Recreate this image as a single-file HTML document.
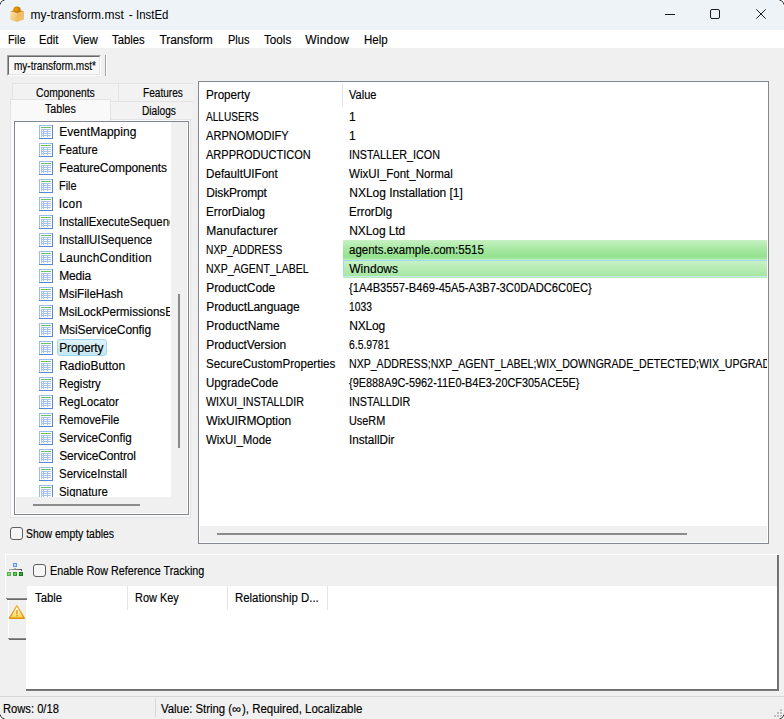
<!DOCTYPE html>
<html>
<head>
<meta charset="utf-8">
<title>my-transform.mst - InstEd</title>
<style>
html,body{margin:0;padding:0;}
body{width:784px;height:719px;overflow:hidden;background:#f0f0f0;position:relative;font-family:"Liberation Sans",sans-serif;color:#000;}
div,span,svg{position:absolute;box-sizing:border-box;}
.t{-webkit-text-stroke:0.15px #000;white-space:pre;transform-origin:0 0;line-height:16px;height:16px;color:#000;font-family:"Liberation Sans",sans-serif;}
.ic{left:24px;}
#titlebar{left:0;top:0;width:784px;height:30px;background:#eef3f8;}
#menubar{left:0;top:30px;width:784px;height:18px;background:#fff;}
#tbbtn{left:7px;top:55px;width:94px;height:21px;background:#f8f8f8;border-top:1px solid #a0a0a0;border-left:1px solid #a0a0a0;border-right:1px solid #fff;border-bottom:1px solid #fff;}
#tbbtn i{position:absolute;left:0;top:0;right:0;bottom:0;border-top:1px solid #696969;border-left:1px solid #696969;border-right:1px solid #e3e3e3;border-bottom:1px solid #e3e3e3;}
#tbsep{left:105px;top:55px;width:2px;height:21px;background:linear-gradient(90deg,#a0a0a0 50%,#fff 50%);}
.tab{background:#f0f0f0;border:1px solid #e3e3e3;}
#tree{left:14px;top:121px;width:175px;height:394px;border:1px solid #828790;background:#fff;}
#treeclip{left:0;top:0;width:155px;height:375px;background:#fff;overflow:hidden;}
#list{left:198px;top:81px;width:571px;height:463px;border:1px solid #828790;background:#fff;}
.thumb{background:#8b8b8b;}
.cb{width:13px;height:13px;border:1px solid #5f5f5f;border-radius:3px;background:#f5f5f5;}
</style>
</head>
<body>
<div id="titlebar"></div>
<div id="menubar"></div>

<!-- app icon -->
<svg style="left:9px;top:5px" width="17" height="18" viewBox="0 0 17 18">
<defs>
<linearGradient id="gl" x1="0" y1="0" x2="1" y2="1"><stop offset="0" stop-color="#fbe7b0"/><stop offset="1" stop-color="#eeb95c"/></linearGradient>
<linearGradient id="gr" x1="0" y1="0" x2="1" y2="1"><stop offset="0" stop-color="#efb659"/><stop offset="1" stop-color="#f3c575"/></linearGradient>
<radialGradient id="gb" cx="0.4" cy="0.45" r="0.6"><stop offset="0" stop-color="#f5a009"/><stop offset="1" stop-color="#b97600"/></radialGradient>
</defs>
<path d="M1.2 6.2 L8 8 L8 17 L1.2 14.6 Z" fill="url(#gl)"/>
<path d="M8 8 L15 6.2 L15 14.6 L8 17 Z" fill="url(#gr)"/>
<path d="M1.2 6.2 L8 4.6 L15 6.2 L8 8 Z" fill="#c98a1a"/>
<ellipse cx="8" cy="4.5" rx="3.6" ry="2.9" fill="url(#gb)"/>
</svg>

<!-- window controls -->
<svg style="left:660px;top:4px" width="112" height="20" viewBox="0 0 112 20" fill="none" stroke="#1a1a1a" stroke-width="1">
<path d="M5 10.5 H15"/>
<rect x="50.5" y="5.5" width="9" height="9" rx="1.5"/>
<path d="M96.3 5.3 L105.7 14.7 M105.7 5.3 L96.3 14.7"/>
</svg>

<!-- toolbar -->
<div id="tbbtn"><i></i></div>
<div id="tbsep"></div>

<!-- tabs -->
<div class="tab" style="left:12px;top:83px;width:107px;height:19px;background:#f2f2f2;"></div>
<div class="tab" style="left:118px;top:83px;width:75px;height:19px;border-right:none;background:#f2f2f2;"></div>
<div class="tab" style="left:110px;top:101px;width:82px;height:19px;border-right:none;background:#f2f2f2;"></div>
<div style="left:10px;top:119px;width:181px;height:399px;border:1px solid #e3e3e3;background:#f9f9f9;"></div>
<div style="left:10px;top:99px;width:101px;height:22px;background:#f9f9f9;border:1px solid #e3e3e3;border-bottom:none;"></div>

<!-- tree -->
<div id="tree">
 <div id="treeclip">
  <div style="left:42px;top:217px;width:50px;height:17px;background:linear-gradient(#dcf2fa,#c5e7f2);border:1px solid #a3d6ec;border-radius:3px;"></div>
  <svg class="ic" style="top:3px" width="14" height="14" viewBox="0 0 14 14" shape-rendering="crispEdges">
<rect x="0" y="0" width="14" height="14" fill="#5588d2"/><rect x="0" y="0" width="13" height="13" fill="#9dbdeb"/><rect x="1" y="1" width="12" height="12" fill="#6f9ddb"/><rect x="1" y="1" width="12" height="12" fill="#fff"/>
<rect x="2" y="2" width="10" height="1" fill="#6cc06a"/>
<g fill="#a9c4ea"><rect x="2" y="4" width="10" height="1"/><rect x="2" y="6" width="10" height="1"/><rect x="2" y="8" width="10" height="1"/><rect x="2" y="10" width="10" height="1"/>
<rect x="2" y="4" width="1" height="8"/><rect x="4" y="4" width="1" height="8"/><rect x="8" y="4" width="1" height="8"/></g>
</svg><svg class="ic" style="top:21px" width="14" height="14" viewBox="0 0 14 14" shape-rendering="crispEdges">
<rect x="0" y="0" width="14" height="14" fill="#5588d2"/><rect x="0" y="0" width="13" height="13" fill="#9dbdeb"/><rect x="1" y="1" width="12" height="12" fill="#6f9ddb"/><rect x="1" y="1" width="12" height="12" fill="#fff"/>
<rect x="2" y="2" width="10" height="1" fill="#6cc06a"/>
<g fill="#a9c4ea"><rect x="2" y="4" width="10" height="1"/><rect x="2" y="6" width="10" height="1"/><rect x="2" y="8" width="10" height="1"/><rect x="2" y="10" width="10" height="1"/>
<rect x="2" y="4" width="1" height="8"/><rect x="4" y="4" width="1" height="8"/><rect x="8" y="4" width="1" height="8"/></g>
</svg><svg class="ic" style="top:39px" width="14" height="14" viewBox="0 0 14 14" shape-rendering="crispEdges">
<rect x="0" y="0" width="14" height="14" fill="#5588d2"/><rect x="0" y="0" width="13" height="13" fill="#9dbdeb"/><rect x="1" y="1" width="12" height="12" fill="#6f9ddb"/><rect x="1" y="1" width="12" height="12" fill="#fff"/>
<rect x="2" y="2" width="10" height="1" fill="#6cc06a"/>
<g fill="#a9c4ea"><rect x="2" y="4" width="10" height="1"/><rect x="2" y="6" width="10" height="1"/><rect x="2" y="8" width="10" height="1"/><rect x="2" y="10" width="10" height="1"/>
<rect x="2" y="4" width="1" height="8"/><rect x="4" y="4" width="1" height="8"/><rect x="8" y="4" width="1" height="8"/></g>
</svg><svg class="ic" style="top:57px" width="14" height="14" viewBox="0 0 14 14" shape-rendering="crispEdges">
<rect x="0" y="0" width="14" height="14" fill="#5588d2"/><rect x="0" y="0" width="13" height="13" fill="#9dbdeb"/><rect x="1" y="1" width="12" height="12" fill="#6f9ddb"/><rect x="1" y="1" width="12" height="12" fill="#fff"/>
<rect x="2" y="2" width="10" height="1" fill="#6cc06a"/>
<g fill="#a9c4ea"><rect x="2" y="4" width="10" height="1"/><rect x="2" y="6" width="10" height="1"/><rect x="2" y="8" width="10" height="1"/><rect x="2" y="10" width="10" height="1"/>
<rect x="2" y="4" width="1" height="8"/><rect x="4" y="4" width="1" height="8"/><rect x="8" y="4" width="1" height="8"/></g>
</svg><svg class="ic" style="top:75px" width="14" height="14" viewBox="0 0 14 14" shape-rendering="crispEdges">
<rect x="0" y="0" width="14" height="14" fill="#5588d2"/><rect x="0" y="0" width="13" height="13" fill="#9dbdeb"/><rect x="1" y="1" width="12" height="12" fill="#6f9ddb"/><rect x="1" y="1" width="12" height="12" fill="#fff"/>
<rect x="2" y="2" width="10" height="1" fill="#6cc06a"/>
<g fill="#a9c4ea"><rect x="2" y="4" width="10" height="1"/><rect x="2" y="6" width="10" height="1"/><rect x="2" y="8" width="10" height="1"/><rect x="2" y="10" width="10" height="1"/>
<rect x="2" y="4" width="1" height="8"/><rect x="4" y="4" width="1" height="8"/><rect x="8" y="4" width="1" height="8"/></g>
</svg><svg class="ic" style="top:93px" width="14" height="14" viewBox="0 0 14 14" shape-rendering="crispEdges">
<rect x="0" y="0" width="14" height="14" fill="#5588d2"/><rect x="0" y="0" width="13" height="13" fill="#9dbdeb"/><rect x="1" y="1" width="12" height="12" fill="#6f9ddb"/><rect x="1" y="1" width="12" height="12" fill="#fff"/>
<rect x="2" y="2" width="10" height="1" fill="#6cc06a"/>
<g fill="#a9c4ea"><rect x="2" y="4" width="10" height="1"/><rect x="2" y="6" width="10" height="1"/><rect x="2" y="8" width="10" height="1"/><rect x="2" y="10" width="10" height="1"/>
<rect x="2" y="4" width="1" height="8"/><rect x="4" y="4" width="1" height="8"/><rect x="8" y="4" width="1" height="8"/></g>
</svg><svg class="ic" style="top:111px" width="14" height="14" viewBox="0 0 14 14" shape-rendering="crispEdges">
<rect x="0" y="0" width="14" height="14" fill="#5588d2"/><rect x="0" y="0" width="13" height="13" fill="#9dbdeb"/><rect x="1" y="1" width="12" height="12" fill="#6f9ddb"/><rect x="1" y="1" width="12" height="12" fill="#fff"/>
<rect x="2" y="2" width="10" height="1" fill="#6cc06a"/>
<g fill="#a9c4ea"><rect x="2" y="4" width="10" height="1"/><rect x="2" y="6" width="10" height="1"/><rect x="2" y="8" width="10" height="1"/><rect x="2" y="10" width="10" height="1"/>
<rect x="2" y="4" width="1" height="8"/><rect x="4" y="4" width="1" height="8"/><rect x="8" y="4" width="1" height="8"/></g>
</svg><svg class="ic" style="top:129px" width="14" height="14" viewBox="0 0 14 14" shape-rendering="crispEdges">
<rect x="0" y="0" width="14" height="14" fill="#5588d2"/><rect x="0" y="0" width="13" height="13" fill="#9dbdeb"/><rect x="1" y="1" width="12" height="12" fill="#6f9ddb"/><rect x="1" y="1" width="12" height="12" fill="#fff"/>
<rect x="2" y="2" width="10" height="1" fill="#6cc06a"/>
<g fill="#a9c4ea"><rect x="2" y="4" width="10" height="1"/><rect x="2" y="6" width="10" height="1"/><rect x="2" y="8" width="10" height="1"/><rect x="2" y="10" width="10" height="1"/>
<rect x="2" y="4" width="1" height="8"/><rect x="4" y="4" width="1" height="8"/><rect x="8" y="4" width="1" height="8"/></g>
</svg><svg class="ic" style="top:147px" width="14" height="14" viewBox="0 0 14 14" shape-rendering="crispEdges">
<rect x="0" y="0" width="14" height="14" fill="#5588d2"/><rect x="0" y="0" width="13" height="13" fill="#9dbdeb"/><rect x="1" y="1" width="12" height="12" fill="#6f9ddb"/><rect x="1" y="1" width="12" height="12" fill="#fff"/>
<rect x="2" y="2" width="10" height="1" fill="#6cc06a"/>
<g fill="#a9c4ea"><rect x="2" y="4" width="10" height="1"/><rect x="2" y="6" width="10" height="1"/><rect x="2" y="8" width="10" height="1"/><rect x="2" y="10" width="10" height="1"/>
<rect x="2" y="4" width="1" height="8"/><rect x="4" y="4" width="1" height="8"/><rect x="8" y="4" width="1" height="8"/></g>
</svg><svg class="ic" style="top:165px" width="14" height="14" viewBox="0 0 14 14" shape-rendering="crispEdges">
<rect x="0" y="0" width="14" height="14" fill="#5588d2"/><rect x="0" y="0" width="13" height="13" fill="#9dbdeb"/><rect x="1" y="1" width="12" height="12" fill="#6f9ddb"/><rect x="1" y="1" width="12" height="12" fill="#fff"/>
<rect x="2" y="2" width="10" height="1" fill="#6cc06a"/>
<g fill="#a9c4ea"><rect x="2" y="4" width="10" height="1"/><rect x="2" y="6" width="10" height="1"/><rect x="2" y="8" width="10" height="1"/><rect x="2" y="10" width="10" height="1"/>
<rect x="2" y="4" width="1" height="8"/><rect x="4" y="4" width="1" height="8"/><rect x="8" y="4" width="1" height="8"/></g>
</svg><svg class="ic" style="top:183px" width="14" height="14" viewBox="0 0 14 14" shape-rendering="crispEdges">
<rect x="0" y="0" width="14" height="14" fill="#5588d2"/><rect x="0" y="0" width="13" height="13" fill="#9dbdeb"/><rect x="1" y="1" width="12" height="12" fill="#6f9ddb"/><rect x="1" y="1" width="12" height="12" fill="#fff"/>
<rect x="2" y="2" width="10" height="1" fill="#6cc06a"/>
<g fill="#a9c4ea"><rect x="2" y="4" width="10" height="1"/><rect x="2" y="6" width="10" height="1"/><rect x="2" y="8" width="10" height="1"/><rect x="2" y="10" width="10" height="1"/>
<rect x="2" y="4" width="1" height="8"/><rect x="4" y="4" width="1" height="8"/><rect x="8" y="4" width="1" height="8"/></g>
</svg><svg class="ic" style="top:201px" width="14" height="14" viewBox="0 0 14 14" shape-rendering="crispEdges">
<rect x="0" y="0" width="14" height="14" fill="#5588d2"/><rect x="0" y="0" width="13" height="13" fill="#9dbdeb"/><rect x="1" y="1" width="12" height="12" fill="#6f9ddb"/><rect x="1" y="1" width="12" height="12" fill="#fff"/>
<rect x="2" y="2" width="10" height="1" fill="#6cc06a"/>
<g fill="#a9c4ea"><rect x="2" y="4" width="10" height="1"/><rect x="2" y="6" width="10" height="1"/><rect x="2" y="8" width="10" height="1"/><rect x="2" y="10" width="10" height="1"/>
<rect x="2" y="4" width="1" height="8"/><rect x="4" y="4" width="1" height="8"/><rect x="8" y="4" width="1" height="8"/></g>
</svg><svg class="ic" style="top:219px" width="14" height="14" viewBox="0 0 14 14" shape-rendering="crispEdges">
<rect x="0" y="0" width="14" height="14" fill="#5588d2"/><rect x="0" y="0" width="13" height="13" fill="#9dbdeb"/><rect x="1" y="1" width="12" height="12" fill="#6f9ddb"/><rect x="1" y="1" width="12" height="12" fill="#fff"/>
<rect x="2" y="2" width="10" height="1" fill="#6cc06a"/>
<g fill="#a9c4ea"><rect x="2" y="4" width="10" height="1"/><rect x="2" y="6" width="10" height="1"/><rect x="2" y="8" width="10" height="1"/><rect x="2" y="10" width="10" height="1"/>
<rect x="2" y="4" width="1" height="8"/><rect x="4" y="4" width="1" height="8"/><rect x="8" y="4" width="1" height="8"/></g>
</svg><svg class="ic" style="top:237px" width="14" height="14" viewBox="0 0 14 14" shape-rendering="crispEdges">
<rect x="0" y="0" width="14" height="14" fill="#5588d2"/><rect x="0" y="0" width="13" height="13" fill="#9dbdeb"/><rect x="1" y="1" width="12" height="12" fill="#6f9ddb"/><rect x="1" y="1" width="12" height="12" fill="#fff"/>
<rect x="2" y="2" width="10" height="1" fill="#6cc06a"/>
<g fill="#a9c4ea"><rect x="2" y="4" width="10" height="1"/><rect x="2" y="6" width="10" height="1"/><rect x="2" y="8" width="10" height="1"/><rect x="2" y="10" width="10" height="1"/>
<rect x="2" y="4" width="1" height="8"/><rect x="4" y="4" width="1" height="8"/><rect x="8" y="4" width="1" height="8"/></g>
</svg><svg class="ic" style="top:255px" width="14" height="14" viewBox="0 0 14 14" shape-rendering="crispEdges">
<rect x="0" y="0" width="14" height="14" fill="#5588d2"/><rect x="0" y="0" width="13" height="13" fill="#9dbdeb"/><rect x="1" y="1" width="12" height="12" fill="#6f9ddb"/><rect x="1" y="1" width="12" height="12" fill="#fff"/>
<rect x="2" y="2" width="10" height="1" fill="#6cc06a"/>
<g fill="#a9c4ea"><rect x="2" y="4" width="10" height="1"/><rect x="2" y="6" width="10" height="1"/><rect x="2" y="8" width="10" height="1"/><rect x="2" y="10" width="10" height="1"/>
<rect x="2" y="4" width="1" height="8"/><rect x="4" y="4" width="1" height="8"/><rect x="8" y="4" width="1" height="8"/></g>
</svg><svg class="ic" style="top:273px" width="14" height="14" viewBox="0 0 14 14" shape-rendering="crispEdges">
<rect x="0" y="0" width="14" height="14" fill="#5588d2"/><rect x="0" y="0" width="13" height="13" fill="#9dbdeb"/><rect x="1" y="1" width="12" height="12" fill="#6f9ddb"/><rect x="1" y="1" width="12" height="12" fill="#fff"/>
<rect x="2" y="2" width="10" height="1" fill="#6cc06a"/>
<g fill="#a9c4ea"><rect x="2" y="4" width="10" height="1"/><rect x="2" y="6" width="10" height="1"/><rect x="2" y="8" width="10" height="1"/><rect x="2" y="10" width="10" height="1"/>
<rect x="2" y="4" width="1" height="8"/><rect x="4" y="4" width="1" height="8"/><rect x="8" y="4" width="1" height="8"/></g>
</svg><svg class="ic" style="top:291px" width="14" height="14" viewBox="0 0 14 14" shape-rendering="crispEdges">
<rect x="0" y="0" width="14" height="14" fill="#5588d2"/><rect x="0" y="0" width="13" height="13" fill="#9dbdeb"/><rect x="1" y="1" width="12" height="12" fill="#6f9ddb"/><rect x="1" y="1" width="12" height="12" fill="#fff"/>
<rect x="2" y="2" width="10" height="1" fill="#6cc06a"/>
<g fill="#a9c4ea"><rect x="2" y="4" width="10" height="1"/><rect x="2" y="6" width="10" height="1"/><rect x="2" y="8" width="10" height="1"/><rect x="2" y="10" width="10" height="1"/>
<rect x="2" y="4" width="1" height="8"/><rect x="4" y="4" width="1" height="8"/><rect x="8" y="4" width="1" height="8"/></g>
</svg><svg class="ic" style="top:309px" width="14" height="14" viewBox="0 0 14 14" shape-rendering="crispEdges">
<rect x="0" y="0" width="14" height="14" fill="#5588d2"/><rect x="0" y="0" width="13" height="13" fill="#9dbdeb"/><rect x="1" y="1" width="12" height="12" fill="#6f9ddb"/><rect x="1" y="1" width="12" height="12" fill="#fff"/>
<rect x="2" y="2" width="10" height="1" fill="#6cc06a"/>
<g fill="#a9c4ea"><rect x="2" y="4" width="10" height="1"/><rect x="2" y="6" width="10" height="1"/><rect x="2" y="8" width="10" height="1"/><rect x="2" y="10" width="10" height="1"/>
<rect x="2" y="4" width="1" height="8"/><rect x="4" y="4" width="1" height="8"/><rect x="8" y="4" width="1" height="8"/></g>
</svg><svg class="ic" style="top:327px" width="14" height="14" viewBox="0 0 14 14" shape-rendering="crispEdges">
<rect x="0" y="0" width="14" height="14" fill="#5588d2"/><rect x="0" y="0" width="13" height="13" fill="#9dbdeb"/><rect x="1" y="1" width="12" height="12" fill="#6f9ddb"/><rect x="1" y="1" width="12" height="12" fill="#fff"/>
<rect x="2" y="2" width="10" height="1" fill="#6cc06a"/>
<g fill="#a9c4ea"><rect x="2" y="4" width="10" height="1"/><rect x="2" y="6" width="10" height="1"/><rect x="2" y="8" width="10" height="1"/><rect x="2" y="10" width="10" height="1"/>
<rect x="2" y="4" width="1" height="8"/><rect x="4" y="4" width="1" height="8"/><rect x="8" y="4" width="1" height="8"/></g>
</svg><svg class="ic" style="top:345px" width="14" height="14" viewBox="0 0 14 14" shape-rendering="crispEdges">
<rect x="0" y="0" width="14" height="14" fill="#5588d2"/><rect x="0" y="0" width="13" height="13" fill="#9dbdeb"/><rect x="1" y="1" width="12" height="12" fill="#6f9ddb"/><rect x="1" y="1" width="12" height="12" fill="#fff"/>
<rect x="2" y="2" width="10" height="1" fill="#6cc06a"/>
<g fill="#a9c4ea"><rect x="2" y="4" width="10" height="1"/><rect x="2" y="6" width="10" height="1"/><rect x="2" y="8" width="10" height="1"/><rect x="2" y="10" width="10" height="1"/>
<rect x="2" y="4" width="1" height="8"/><rect x="4" y="4" width="1" height="8"/><rect x="8" y="4" width="1" height="8"/></g>
</svg><svg class="ic" style="top:363px" width="14" height="14" viewBox="0 0 14 14" shape-rendering="crispEdges">
<rect x="0" y="0" width="14" height="14" fill="#5588d2"/><rect x="0" y="0" width="13" height="13" fill="#9dbdeb"/><rect x="1" y="1" width="12" height="12" fill="#6f9ddb"/><rect x="1" y="1" width="12" height="12" fill="#fff"/>
<rect x="2" y="2" width="10" height="1" fill="#6cc06a"/>
<g fill="#a9c4ea"><rect x="2" y="4" width="10" height="1"/><rect x="2" y="6" width="10" height="1"/><rect x="2" y="8" width="10" height="1"/><rect x="2" y="10" width="10" height="1"/>
<rect x="2" y="4" width="1" height="8"/><rect x="4" y="4" width="1" height="8"/><rect x="8" y="4" width="1" height="8"/></g>
</svg>
  <span class="t" style="left:44.20px;top:2px;font-size:12px;letter-spacing:0.051px;">EventMapping</span>
<span class="t" style="left:44.20px;top:20px;font-size:12px;transform:scaleX(0.9369);">Feature</span>
<span class="t" style="left:44.20px;top:38px;font-size:12px;letter-spacing:-0.100px;">FeatureComponents</span>
<span class="t" style="left:44.20px;top:56px;font-size:12px;transform:scaleX(0.9053);">File</span>
<span class="t" style="left:43.70px;top:74px;font-size:12px;letter-spacing:0.297px;">Icon</span>
<span class="t" style="left:43.75px;top:92px;font-size:12px;transform:scaleX(0.9475);">InstallExecuteSequence</span>
<span class="t" style="left:43.74px;top:110px;font-size:12px;transform:scaleX(0.9564);">InstallUISequence</span>
<span class="t" style="left:44.20px;top:128px;font-size:12px;letter-spacing:0.172px;">LaunchCondition</span>
<span class="t" style="left:44.20px;top:146px;font-size:12px;letter-spacing:-0.202px;">Media</span>
<span class="t" style="left:44.20px;top:164px;font-size:12px;transform:scaleX(0.9703);">MsiFileHash</span>
<span class="t" style="left:44.20px;top:182px;font-size:12px;transform:scaleX(0.9711);">MsiLockPermissionsEx</span>
<span class="t" style="left:44.20px;top:200px;font-size:12px;letter-spacing:-0.099px;">MsiServiceConfig</span>
<span class="t" style="left:44.20px;top:218px;font-size:12px;letter-spacing:-0.150px;">Property</span>
<span class="t" style="left:44.20px;top:236px;font-size:12px;letter-spacing:-0.017px;">RadioButton</span>
<span class="t" style="left:44.20px;top:254px;font-size:12px;transform:scaleX(0.9475);">Registry</span>
<span class="t" style="left:44.20px;top:272px;font-size:12px;transform:scaleX(0.9655);">RegLocator</span>
<span class="t" style="left:44.20px;top:290px;font-size:12px;transform:scaleX(0.9433);">RemoveFile</span>
<span class="t" style="left:44.20px;top:308px;font-size:12px;transform:scaleX(0.9740);">ServiceConfig</span>
<span class="t" style="left:44.20px;top:326px;font-size:12px;letter-spacing:-0.149px;">ServiceControl</span>
<span class="t" style="left:44.20px;top:344px;font-size:12px;transform:scaleX(0.9534);">ServiceInstall</span>
<span class="t" style="left:44.20px;top:362px;font-size:12px;transform:scaleX(0.9500);">Signature</span>
 </div>
 <div style="left:156px;top:0;width:16px;height:375px;background:#f0f0f0;"></div>
 <div style="left:1px;top:375px;width:171px;height:16px;background:#f0f0f0;"></div>
 <div class="thumb" style="left:163px;top:172px;width:2px;height:154px;"></div>
 <div class="thumb" style="left:18px;top:382px;width:107px;height:2px;"></div>
</div>

<!-- show empty tables -->
<div class="cb" style="left:10px;top:527px;"></div>

<!-- list -->
<div id="list">
 <div style="left:143px;top:1px;width:1px;height:24px;background:#e5e5e5;"></div>
 <div style="left:144px;top:158px;width:424px;height:38px;background:#b9edb5;">
   <div style="left:0;top:0;width:424px;height:19px;background:linear-gradient(#c6f1c3 0%,#a6e8a1 50%,#93e28e 88%,#a9e8a4 100%);"></div>
   <div style="left:0;top:20px;width:424px;height:17px;background:linear-gradient(#c8f2c6 0%,#a3e6a0 100%);border-top:1px solid #9fd9f5;border-left:1px solid #9fd9f5;"></div>
   <div style="left:0;top:36px;width:424px;height:1px;background:#c8e9f8;"></div>
   <div style="left:0;top:37px;width:424px;height:1px;background:#b6ecb3;"></div>
 </div>
 <div style="left:1px;top:444px;width:567px;height:16px;background:#f0f0f0;"></div>
 <div class="thumb" style="left:18px;top:451px;width:470px;height:2px;"></div>
</div>

<!-- bottom panel -->
<div style="left:5px;top:554px;width:774px;height:1px;background:#fff;"></div>
<div style="left:777px;top:555px;width:2px;height:136px;background:linear-gradient(90deg,#696969,#7d7d7d);"></div>
<div style="left:26px;top:689px;width:753px;height:2px;background:linear-gradient(#696969,#7d7d7d);"></div>
<div style="left:27px;top:586px;width:750px;height:103px;background:#fff;"></div>
<!-- side tabs -->
<div style="left:5px;top:555px;width:1px;height:43px;background:#fff;"></div>
<div style="left:6px;top:598px;width:21px;height:1px;background:#8a8a8a;"></div>
<div style="left:7px;top:599px;width:20px;height:1px;background:#696969;"></div>
<div style="left:8px;top:600px;width:1px;height:38px;background:#fff;"></div>
<div style="left:8px;top:638px;width:18px;height:1px;background:#8a8a8a;"></div>
<div style="left:9px;top:639px;width:17px;height:1px;background:#696969;"></div>
<div style="left:26px;top:600px;width:1px;height:89px;background:#fff;"></div>
<!-- tree icon -->
<svg style="left:7px;top:563px" width="17" height="14" viewBox="0 0 17 14" shape-rendering="crispEdges">
<defs><linearGradient id="cg" x1="0" y1="0" x2="1" y2="0"><stop offset="0" stop-color="#b4b4b4"/><stop offset="1" stop-color="#4a4a4a"/></linearGradient></defs>
<rect x="6" y="0" width="4" height="4" fill="#5e97e2"/><rect x="7" y="1" width="2" height="2" fill="#c3d5f6"/>
<rect x="7" y="5" width="2" height="1" fill="#b0b0b0"/>
<rect x="2" y="6" width="13" height="1" fill="url(#cg)"/>
<rect x="2" y="7" width="1" height="1" fill="#b4b4b4"/><rect x="14" y="7" width="1" height="1" fill="#4a4a4a"/>
<rect x="0" y="9" width="4" height="4" fill="#4db748"/><rect x="1" y="10" width="2" height="2" fill="#8fd58a"/>
<rect x="6" y="9" width="4" height="4" fill="#2f9e2b"/><rect x="7" y="10" width="2" height="2" fill="#6cc468"/>
<rect x="12" y="9" width="4" height="4" fill="#0f7a0f"/><rect x="13" y="10" width="2" height="2" fill="#48a845"/>
</svg>
<!-- warning icon -->
<svg style="left:8px;top:604px" width="18" height="16" viewBox="0 0 18 16">
<defs><linearGradient id="wg" x1="0" y1="0" x2="0" y2="1"><stop offset="0.25" stop-color="#fffdf0"/><stop offset="1" stop-color="#f6cf3a"/></linearGradient>
<linearGradient id="ws" x1="0" y1="0" x2="0" y2="1"><stop offset="0" stop-color="#f2b93a"/><stop offset="1" stop-color="#d9920f"/></linearGradient></defs>
<path d="M8.9 1.6 L16.3 14.2 H1.5 Z" fill="url(#wg)" stroke="url(#ws)" stroke-width="1.4" stroke-linejoin="round"/>
<rect x="8.1" y="6" width="1.7" height="4.3" rx="0.6" fill="#e3a226"/><rect x="8.1" y="11" width="1.7" height="1.5" fill="#e3a226"/>
</svg>
<div class="cb" style="left:33px;top:564px;"></div>
<div style="left:127px;top:586px;width:1px;height:24px;background:#e5e5e5;"></div>
<div style="left:227px;top:586px;width:1px;height:24px;background:#e5e5e5;"></div>
<div style="left:327px;top:586px;width:1px;height:24px;background:#e5e5e5;"></div>

<!-- status bar -->
<div style="left:0;top:696px;width:784px;height:1px;background:#d7d7d7;"></div>
<div style="left:155px;top:698px;width:1px;height:19px;background:#d7d7d7;"></div>
<svg style="left:772px;top:707px" width="12" height="12" viewBox="0 0 12 12" shape-rendering="crispEdges" fill="#bfbfbf">
<rect x="8" y="2" width="2" height="2"/><rect x="5" y="5" width="2" height="2"/><rect x="8" y="5" width="2" height="2"/>
<rect x="2" y="8" width="2" height="2"/><rect x="5" y="8" width="2" height="2"/><rect x="8" y="8" width="2" height="2"/>
</svg>

<!-- window corners -->
<svg style="left:0;top:0" width="6" height="6" viewBox="0 0 6 6"><path d="M0 0 H5 L0 5 Z" fill="#fff"/><path d="M0 4.6 Q0.6 0.6 4.6 0" fill="none" stroke="#333" stroke-width="1"/></svg>
<svg style="left:778px;top:0" width="6" height="6" viewBox="0 0 6 6"><path d="M6 0 H1 L6 5 Z" fill="#fff"/><path d="M6 4.6 Q5.4 0.6 1.4 0" fill="none" stroke="#333" stroke-width="1"/></svg>
<svg style="left:0;top:713px" width="6" height="6" viewBox="0 0 6 6"><path d="M0 6 H5 L0 1 Z" fill="#fff"/><path d="M0 1.4 Q0.6 5.4 4.6 6" fill="none" stroke="#333" stroke-width="1"/></svg>
<svg style="left:778px;top:713px" width="6" height="6" viewBox="0 0 6 6"><path d="M6 6 H1 L6 1 Z" fill="#fff"/><path d="M6 1.4 Q5.4 5.4 1.4 6" fill="none" stroke="#333" stroke-width="1"/></svg>

<span class="t" style="left:30.60px;top:7px;font-size:12px;letter-spacing:-0.013px;-webkit-text-stroke:0;">my-transform.mst</span>
<span class="t" style="left:128.70px;top:7px;font-size:12px;-webkit-text-stroke:0;">-</span>
<span class="t" style="left:135.85px;top:7px;font-size:12px;transform:scaleX(0.9522);-webkit-text-stroke:0;">InstEd</span>
<span class="t" style="left:7.60px;top:32px;font-size:12px;transform:scaleX(0.9002);">File</span>
<span class="t" style="left:39.30px;top:32px;font-size:12px;transform:scaleX(0.9324);">Edit</span>
<span class="t" style="left:73.20px;top:32px;font-size:12px;transform:scaleX(0.9569);">View</span>
<span class="t" style="left:112.40px;top:32px;font-size:12px;transform:scaleX(0.9398);">Tables</span>
<span class="t" style="left:159.60px;top:32px;font-size:12px;letter-spacing:-0.129px;">Transform</span>
<span class="t" style="left:227.50px;top:32px;font-size:12px;transform:scaleX(0.9167);">Plus</span>
<span class="t" style="left:263.80px;top:32px;font-size:12px;transform:scaleX(0.9710);">Tools</span>
<span class="t" style="left:305.30px;top:32px;font-size:12px;letter-spacing:0.197px;">Window</span>
<span class="t" style="left:363.60px;top:32px;font-size:12px;transform:scaleX(0.9598);">Help</span>
<span class="t" style="left:13.50px;top:58px;font-size:12px;transform:scaleX(0.8359);">my-transform.mst*</span>
<span class="t" style="left:35.70px;top:85px;font-size:12px;transform:scaleX(0.8627);">Components</span>
<span class="t" style="left:143.40px;top:85px;font-size:12px;transform:scaleX(0.8405);">Features</span>
<span class="t" style="left:44.60px;top:101px;font-size:12px;transform:scaleX(0.8908);">Tables</span>
<span class="t" style="left:141.60px;top:103px;font-size:12px;transform:scaleX(0.8471);">Dialogs</span>
<span class="t" style="left:26.30px;top:526px;font-size:12px;transform:scaleX(0.8680);">Show empty tables</span>
<span class="t" style="left:49.90px;top:563px;font-size:12px;transform:scaleX(0.8967);">Enable Row Reference Tracking</span>
<span class="t" style="left:34.80px;top:590px;font-size:12px;transform:scaleX(0.9409);">Table</span>
<span class="t" style="left:134.80px;top:590px;font-size:12px;transform:scaleX(0.9101);">Row Key</span>
<span class="t" style="left:234.60px;top:590px;font-size:12px;transform:scaleX(0.9509);">Relationship D...</span>
<span class="t" style="left:2.80px;top:701px;font-size:12px;transform:scaleX(0.9312);">Rows: 0/18</span>
<span class="t" style="left:160.70px;top:701px;font-size:12px;transform:scaleX(0.9461);">Value: String (</span>
<span class="t" style="left:232.40px;top:701px;font-size:12px;transform:scaleX(1.0625);">∞</span>
<span class="t" style="left:242.00px;top:701px;font-size:12px;transform:scaleX(0.9549);">), Required, Localizable</span>
<span class="t" style="left:206.30px;top:87px;font-size:12px;transform:scaleX(0.9702);">Property</span>
<span class="t" style="left:349.30px;top:87px;font-size:12px;transform:scaleX(0.9194);">Value</span>
<span class="t" style="left:206.30px;top:109px;font-size:12px;transform:scaleX(0.8406);">ALLUSERS</span>
<span class="t" style="left:206.30px;top:128px;font-size:12px;transform:scaleX(0.9257);">ARPNOMODIFY</span>
<span class="t" style="left:206.30px;top:147px;font-size:12px;transform:scaleX(0.9194);">ARPPRODUCTICON</span>
<span class="t" style="left:206.30px;top:166px;font-size:12px;transform:scaleX(0.9699);">DefaultUIFont</span>
<span class="t" style="left:206.30px;top:185px;font-size:12px;letter-spacing:-0.164px;">DiskPrompt</span>
<span class="t" style="left:206.30px;top:204px;font-size:12px;transform:scaleX(0.9698);">ErrorDialog</span>
<span class="t" style="left:206.30px;top:223px;font-size:12px;letter-spacing:0.045px;">Manufacturer</span>
<span class="t" style="left:206.30px;top:242px;font-size:12px;transform:scaleX(0.8528);">NXP_ADDRESS</span>
<span class="t" style="left:206.30px;top:261px;font-size:12px;transform:scaleX(0.8796);">NXP_AGENT_LABEL</span>
<span class="t" style="left:206.30px;top:280px;font-size:12px;letter-spacing:-0.117px;">ProductCode</span>
<span class="t" style="left:206.30px;top:299px;font-size:12px;letter-spacing:-0.098px;">ProductLanguage</span>
<span class="t" style="left:206.30px;top:318px;font-size:12px;">ProductName</span>
<span class="t" style="left:206.30px;top:337px;font-size:12px;letter-spacing:-0.116px;">ProductVersion</span>
<span class="t" style="left:206.30px;top:356px;font-size:12px;transform:scaleX(0.9638);">SecureCustomProperties</span>
<span class="t" style="left:206.30px;top:375px;font-size:12px;transform:scaleX(0.9654);">UpgradeCode</span>
<span class="t" style="left:206.30px;top:394px;font-size:12px;transform:scaleX(0.8917);">WIXUI_INSTALLDIR</span>
<span class="t" style="left:206.30px;top:413px;font-size:12px;letter-spacing:-0.095px;">WixUIRMOption</span>
<span class="t" style="left:206.30px;top:432px;font-size:12px;transform:scaleX(0.9520);">WixUI_Mode</span>
<span class="t" style="left:349.00px;top:109px;font-size:12px;">1</span>
<span class="t" style="left:349.00px;top:128px;font-size:12px;">1</span>
<span class="t" style="left:349.10px;top:147px;font-size:12px;transform:scaleX(0.8997);">INSTALLER_ICON</span>
<span class="t" style="left:349.30px;top:166px;font-size:12px;transform:scaleX(0.9613);">WixUI_Font_Normal</span>
<span class="t" style="left:349.30px;top:185px;font-size:12px;letter-spacing:-0.026px;">NXLog Installation [1]</span>
<span class="t" style="left:349.30px;top:204px;font-size:12px;transform:scaleX(0.9648);">ErrorDlg</span>
<span class="t" style="left:349.30px;top:223px;font-size:12px;letter-spacing:-0.104px;">NXLog Ltd</span>
<span class="t" style="left:349.30px;top:242px;font-size:12px;transform:scaleX(0.9583);">agents.example.com:5515</span>
<span class="t" style="left:349.30px;top:261px;font-size:12px;">Windows</span>
<span class="t" style="left:349.30px;top:280px;font-size:12px;transform:scaleX(0.9329);">{1A4B3557-B469-45A5-A3B7-3C0DADC6C0EC}</span>
<span class="t" style="left:349.30px;top:299px;font-size:12px;transform:scaleX(0.8586);">1033</span>
<span class="t" style="left:349.30px;top:318px;font-size:12px;letter-spacing:-0.204px;">NXLog</span>
<span class="t" style="left:349.30px;top:337px;font-size:12px;transform:scaleX(0.8653);">6.5.9781</span>
<div style="position:absolute;left:343px;top:354px;width:424px;height:19px;overflow:hidden"><span class="t" style="left:6.30px;top:2px;font-size:12px;transform:scaleX(0.8806);">NXP_ADDRESS;NXP_AGENT_LABEL;WIX_DOWNGRADE_DETECTED;WIX_UPGRADE_DETECTED</span></div>
<span class="t" style="left:349.30px;top:375px;font-size:12px;transform:scaleX(0.9077);">{9E888A9C-5962-11E0-B4E3-20CF305ACE5E}</span>
<span class="t" style="left:349.10px;top:394px;font-size:12px;transform:scaleX(0.8961);">INSTALLDIR</span>
<span class="t" style="left:349.30px;top:413px;font-size:12px;transform:scaleX(0.9049);">UseRM</span>
<span class="t" style="left:349.03px;top:432px;font-size:12px;transform:scaleX(0.9742);">InstallDir</span>
</body>
</html>
